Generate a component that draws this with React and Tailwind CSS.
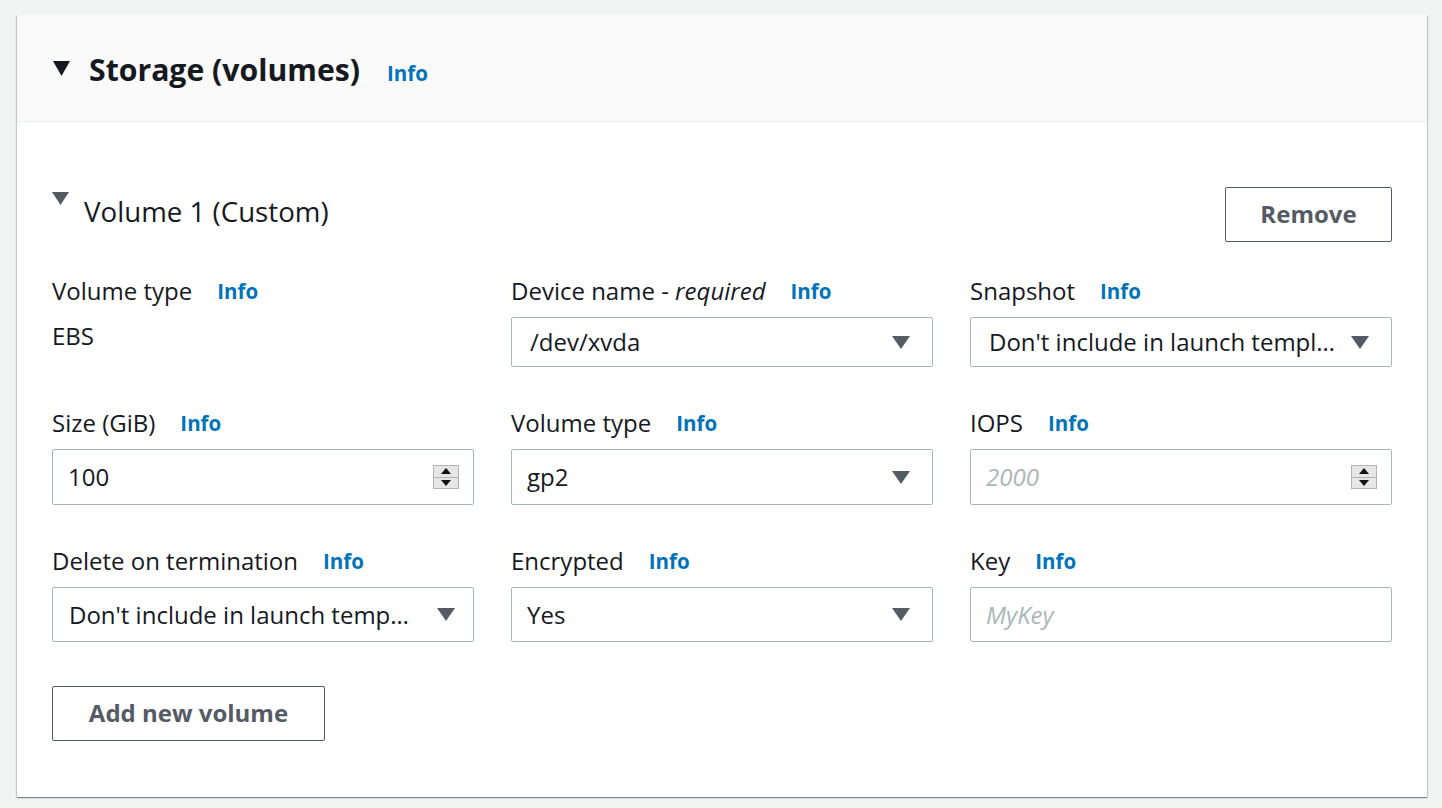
const font = { fontFamily: '"Open Sans", "Noto Sans", sans-serif' };

function Info({ ml = "ml-[25px]" }) {
  return <span className={`${ml} text-[20.5px] font-bold text-[#0073bb]`}>Info</span>;
}

function Label({ children }) {
  return (
    <div className="flex h-[32px] items-center text-[24px] leading-[32px] text-[#16191f]">
      <span>{children}</span>
      <Info />
    </div>
  );
}

function Caret({ color = "#545b64", w = 18, h = 13 }) {
  return (
    <svg width={w} height={h} viewBox="0 0 18 13" preserveAspectRatio="none" className="shrink-0">
      <path d="M0 0 H18 L9 13 Z" fill={color} />
    </svg>
  );
}

function Select({ value, h = "h-[50px]", pr = "pr-[22px]", pl = "pl-[16px]", gap = "ml-[12px]" }) {
  return (
    <div className={`mt-[10px] flex ${h} items-center justify-between rounded-[2px] border border-[#aab7b8] bg-white ${pl} ${pr}`}>
      <span className="truncate text-[24px] text-[#16191f]">{value}</span>
      <span className={gap}>
        <Caret />
      </span>
    </div>
  );
}

function Spinner() {
  return (
    <div className="flex h-[24px] w-[26px] flex-col border border-[#b4b4b4] bg-[#e6e6e6]">
      <div className="flex flex-1 items-center justify-center border-b border-[#b4b4b4]">
        <svg width="10" height="6" viewBox="0 0 10 6">
          <path d="M0 6 H10 L5 0 Z" fill="#111" />
        </svg>
      </div>
      <div className="flex flex-1 items-center justify-center">
        <svg width="10" height="6" viewBox="0 0 10 6">
          <path d="M0 0 H10 L5 6 Z" fill="#111" />
        </svg>
      </div>
    </div>
  );
}

function NumberInput({ value, placeholder }) {
  return (
    <div className="mt-[10px] flex h-[56px] items-center justify-between rounded-[2px] border border-[#aab7b8] bg-white pl-[15px] pr-[14px]">
      {value ? (
        <span className="text-[24px] text-[#16191f]">{value}</span>
      ) : (
        <span className="text-[24px] italic text-[#aab7b8]">{placeholder}</span>
      )}
      <Spinner />
    </div>
  );
}

export default function App() {
  return (
    <div style={font} className="min-h-[808px] w-full bg-[#f2f3f3] pt-[15px] pl-[17px]">
      <div className="h-[782px] w-[1410px] bg-white shadow-[0_1px_1px_0_rgba(0,28,36,0.3),1px_1px_1px_0_rgba(0,28,36,0.15),-1px_1px_1px_0_rgba(0,28,36,0.15)]">
        <div className="flex h-[107px] items-center border-b border-[#eaeded] bg-[#fafafa] pl-[36px]">
          <Caret color="#16191f" w={17} h={15} />
          <div className="ml-[19px] flex items-baseline pt-[4px]">
            <h2 className="text-[30.2px] font-bold text-[#16191f]">Storage (volumes)</h2>
            <Info ml="ml-[27px]" />
          </div>
        </div>

        <div className="px-[35px] pt-[65px]">
          <div className="flex items-start justify-between">
            <div className="flex items-start">
              <div className="mt-[5px]">
                <Caret w={17} h={13} />
              </div>
              <span className="ml-[15px] mt-[4px] text-[27.7px] text-[#16191f]">Volume 1 (Custom)</span>
            </div>
            <button className="h-[55px] w-[167px] rounded-[2px] border border-[#545b64] pb-[2px] text-[24px] font-bold text-[#545b64]">
              Remove
            </button>
          </div>

          <div className="mt-[33px] grid grid-cols-[422px_422px_422px] gap-x-[37px] gap-y-[40px]">
            <div>
              <Label>Volume type</Label>
              <div className="mt-[11px] text-[24px] text-[#16191f]">EBS</div>
            </div>
            <div>
              <Label>
                Device name - <i>required</i>
              </Label>
              <Select value="/dev/xvda" pl="pl-[18px]" />
            </div>
            <div>
              <Label>Snapshot</Label>
              <Select value="Don't include in launch template" pl="pl-[18px]" pr="pr-[22px]" gap="ml-[10px]" />
            </div>

            <div>
              <Label>Size (GiB)</Label>
              <NumberInput value="100" />
            </div>
            <div>
              <Label>Volume type</Label>
              <Select value="gp2" h="h-[56px]" pl="pl-[15px]" />
            </div>
            <div>
              <Label>IOPS</Label>
              <NumberInput placeholder="2000" />
            </div>

            <div>
              <Label>Delete on termination</Label>
              <Select value="Don't include in launch template" h="h-[55px]" pl="pl-[16px]" pr="pr-[18px]" gap="ml-[24px]" />
            </div>
            <div>
              <Label>Encrypted</Label>
              <Select value="Yes" h="h-[55px]" pl="pl-[15px]" />
            </div>
            <div>
              <Label>Key</Label>
              <div className="mt-[10px] flex h-[55px] items-center rounded-[2px] border border-[#aab7b8] bg-white pl-[15px]">
                <span className="text-[24px] italic text-[#aab7b8]">MyKey</span>
              </div>
            </div>
          </div>

          <button className="mt-[44px] h-[55px] w-[273px] rounded-[2px] border border-[#545b64] pb-[2px] text-[24px] font-bold text-[#545b64]">
            Add new volume
          </button>
        </div>
      </div>
    </div>
  );
}
